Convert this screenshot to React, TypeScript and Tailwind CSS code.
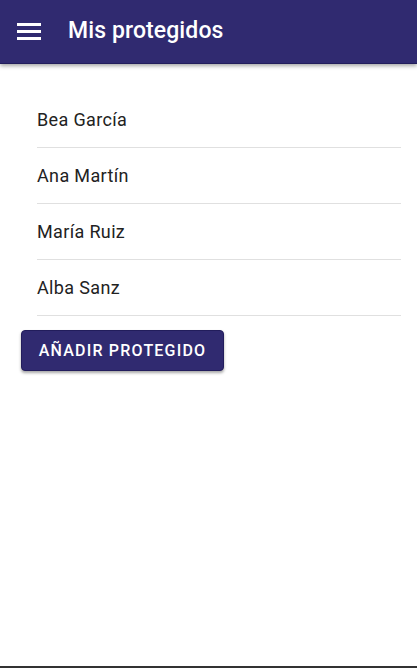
export default function App() {
  const names = ["Bea García", "Ana Martín", "María Ruiz", "Alba Sanz"];
  return (
    <div className="h-[668px] w-[417px] bg-white flex flex-col overflow-hidden" style={{ fontFamily: "Roboto, 'Liberation Sans', sans-serif" }}>
      <header className="h-[64px] shrink-0 bg-[#302a70] border-b border-[#221d5c] flex items-center shadow-[0_2px_4px_rgba(0,0,0,0.35)] z-10">
        <div className="ml-[17px] w-[24px] flex flex-col gap-[4px]">
          <span className="block h-[3px] bg-white" />
          <span className="block h-[3px] bg-white" />
          <span className="block h-[3px] bg-white" />
        </div>
        <h1 className="ml-[27px] text-white text-[23px] font-medium tracking-[0.1px]">Mis protegidos</h1>
      </header>
      <main className="flex-1 pl-[21px] pr-[16px] pt-[28px]">
        <ul className="pl-[16px]">
          {names.map((n) => (
            <li key={n} className="h-[56px] flex items-center border-b border-[#e0e0e0] text-[18px] tracking-[0.35px] text-[#222]">
              {n}
            </li>
          ))}
        </ul>
        <button className="mt-[14px] h-[41px] w-[203px] rounded-[4px] bg-[#302a70] border border-[#221d5c] text-white text-[16px] font-medium tracking-[1.2px] shadow-[0_2px_3px_rgba(0,0,0,0.35)]">
          AÑADIR PROTEGIDO
        </button>
      </main>
      <div className="h-[2px] bg-[#333] shrink-0" />
    </div>
  );
}
